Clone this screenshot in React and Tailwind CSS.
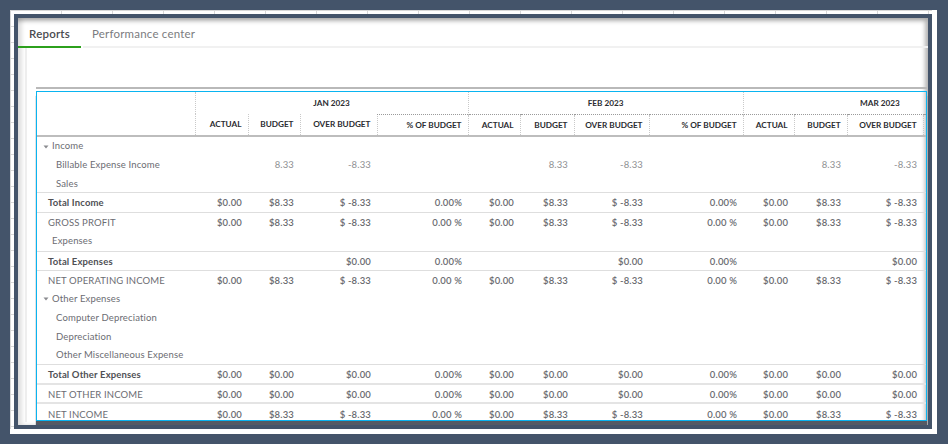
import React from "react";

const widths = [158, 53, 52, 77, 91, 52, 54, 75, 94, 51, 53, 76, 93];
const subHeads = ["ACTUAL", "BUDGET", "OVER BUDGET", "% OF BUDGET"];

const money = ["$0.00", "$8.33", "$ -8.33"];
const zeros = ["$0.00", "$0.00", "$0.00"];
const detail = ["", "8.33", "-8.33"];

// the last column runs past the edge of the box, so it stays empty
const repeat = (a, pct) => [...a, pct, ...a, pct, ...a, ""];

const rows = [
  { label: "Income", caret: true, h: "h-[19px]" },
  { label: "Billable Expense Income", indent: "pl-[19px]", h: "h-[20px]", light: true, values: repeat(detail, "") },
  { label: "Sales", indent: "pl-[19px]", h: "h-[17px]" },
  { label: "Total Income", bold: true, line: true, h: "h-[20px]", values: repeat(money, "0.00%") },
  { label: "GROSS PROFIT", line: true, h: "h-[19px]", values: repeat(money, "0.00 %") },
  { label: "Expenses", indent: "pl-[15px]", h: "h-[20px]" },
  { label: "Total Expenses", bold: true, line: true, h: "h-[19px]", values: repeat(["", "", "$0.00"], "0.00%") },
  { label: "NET OPERATING INCOME", line: true, h: "h-[19px]", values: repeat(money, "0.00 %") },
  { label: "Other Expenses", caret: true, h: "h-[19px]" },
  { label: "Computer Depreciation", indent: "pl-[19px]", h: "h-[19px]" },
  { label: "Depreciation", indent: "pl-[19px]", h: "h-[19px]" },
  { label: "Other Miscellaneous Expense", indent: "pl-[19px]", h: "h-[18px]" },
  { label: "Total Other Expenses", bold: true, line: true, h: "h-[20px]", values: repeat(zeros, "0.00%") },
  { label: "NET OTHER INCOME", line: true, thick: true, h: "h-[19px]", values: repeat(zeros, "0.00%") },
  { label: "NET INCOME", line: true, thick: true, h: "h-[19px]", values: repeat(money, "0.00 %") },
];

const Caret = () => (
  <svg width="6" height="4" viewBox="0 0 6 4" className="mr-[3px] inline-block align-middle">
    <path d="M0.5 0.5h5L3 3.5z" fill="#8a8b8f" />
  </svg>
);

const ReportTable = () => (
  <table className="table-fixed w-[979px] font-['Lato',sans-serif] text-[9.5px] tracking-[0.15px] text-[#6b6c72]">
    <colgroup>
      {widths.map((w, i) => (
        <col key={i} style={{ width: w }} />
      ))}
    </colgroup>
    <thead className="text-[#2b2c30] font-bold text-[8.2px] tracking-normal border-b-2 border-[#bdbdbd]">
      <tr className="h-[22px]">
        <th />
        {["JAN 2023", "FEB 2023", "MAR 2023"].map((m) => (
          <th key={m} colSpan={4} className="text-center border-l border-dotted border-[#c9c9c9] pt-px">
            {m}
          </th>
        ))}
      </tr>
      <tr className="h-[22px]">
        <th />
        {[0, 1, 2].flatMap((m) =>
          subHeads.map((s, i) => (
            <th
              key={m + s}
              className={`text-right pr-[6px] border-l border-dotted border-[#c9c9c9] ${
                m === 0 && i < 3 ? "" : "border-t border-t-solid border-t-[#9a9a9a]"
              }`}
            >
              {m === 2 && i === 3 ? "" : s}
            </th>
          ))
        )}
      </tr>
    </thead>
    <tbody>
      {rows.map((r) => (
        <tr
          key={r.label}
          className={`${r.h} ${r.line ? "border-t border-[#dedede]" : ""} ${r.thick ? "border-t-2 border-[#e4e4e4]" : ""}`}
        >
          <td className={`whitespace-nowrap ${r.line ? "pt-[3px]" : "pt-px"} ${r.bold ? "font-bold text-[#4f5055]" : ""} ${r.indent || "pl-[11px]"} ${r.caret ? "!pl-[6px]" : ""}`}>
            {r.caret && <Caret />}
            {r.label}
          </td>
          {widths.slice(1).map((_, i) => (
            <td
              key={i}
              className={`text-right pr-[6px] ${r.line ? "pt-[3px]" : "pt-px"} ${r.light ? "text-[#8e8f93]" : "font-semibold text-[#6a6b70]"}`}
            >
              {r.values ? r.values[i] : ""}
            </td>
          ))}
        </tr>
      ))}
    </tbody>
  </table>
);

export default function App() {
  return (
    <div className="h-[444px] w-[948px] overflow-hidden bg-[#44546a] pl-[10px] pt-[10px]">
      <div className="h-[424px] w-[927px] border-r-[5px] border-b-[5px] border-white bg-white bg-[linear-gradient(#d8d8d8_1px,transparent_1px),linear-gradient(90deg,#d8d8d8_1px,transparent_1px)] bg-[length:51px_16px] pl-[4px] pt-[4px]">
        <div className="h-[415px] w-[918px] overflow-hidden border-[4px] border-[#44546a] bg-white shadow-[inset_-3px_3px_4px_rgba(0,0,0,0.3),inset_4px_0_4px_rgba(0,0,0,0.12)]">
          <div className="flex h-[30px] items-end font-['Lato',sans-serif] text-[11.5px] tracking-[0.2px]">
            <div className="mr-[2px] flex h-[30px] w-[63px] items-center justify-center border-b-2 border-[#2ca01c] pt-[3px] font-semibold text-[#4a4b50]">
              Reports
            </div>
            <div className="flex h-[30px] w-[845px] items-center border-b-2 border-[#f1f1f1] pl-[9px] pt-[3px] text-[#7b7c80]">
              Performance center
            </div>
          </div>
          <div className="ml-[7px] mr-px flex h-[374px] flex-col border-l-2 border-[#eeeeee] pl-[9px] pt-[39px]">
            <div className="mb-[2px] h-[2px] bg-[#b9b9b9]" />
            <div className="h-[330px] overflow-hidden border border-[#0ab4f0] shadow-[0_5px_1px_#555a64]">
              <ReportTable />
            </div>
          </div>
        </div>
      </div>
    </div>
  );
}
